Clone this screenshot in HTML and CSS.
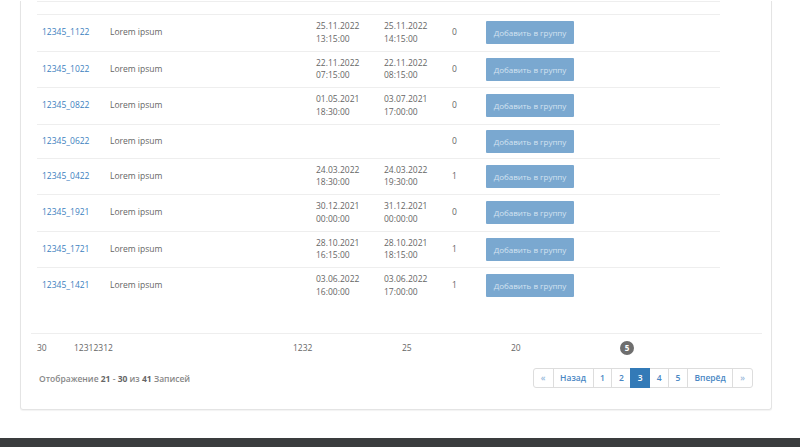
FILE: index.html
```html
<!DOCTYPE html>
<html lang="ru">
<head>
    <meta charset="UTF-8">
    <meta name="viewport" content="width=device-width, initial-scale=1.0">
    <title>Группы</title>
    <link rel="stylesheet" href="styles.css">
</head>
<body>
    <div class="card">
        <div class="scroll-body">
            <table class="grid">
                <colgroup>
                    <col class="c-id"><col class="c-name"><col class="c-date"><col class="c-date"><col class="c-count"><col>
                </colgroup>
                <tr class="spacer"><td colspan="6"></td></tr>
                <tr>
                    <td><a href="#">12345_1122</a></td>
                    <td>Lorem ipsum</td>
                    <td>25.11.2022<br>13:15:00</td>
                    <td>25.11.2022<br>14:15:00</td>
                    <td>0</td>
                    <td><button class="btn-add" disabled>Добавить в группу</button></td>
                </tr>
                <tr>
                    <td><a href="#">12345_1022</a></td>
                    <td>Lorem ipsum</td>
                    <td>22.11.2022<br>07:15:00</td>
                    <td>22.11.2022<br>08:15:00</td>
                    <td>0</td>
                    <td><button class="btn-add" disabled>Добавить в группу</button></td>
                </tr>
                <tr>
                    <td><a href="#">12345_0822</a></td>
                    <td>Lorem ipsum</td>
                    <td>01.05.2021<br>18:30:00</td>
                    <td>03.07.2021<br>17:00:00</td>
                    <td>0</td>
                    <td><button class="btn-add" disabled>Добавить в группу</button></td>
                </tr>
                <tr>
                    <td><a href="#">12345_0622</a></td>
                    <td>Lorem ipsum</td>
                    <td></td>
                    <td></td>
                    <td>0</td>
                    <td><button class="btn-add" disabled>Добавить в группу</button></td>
                </tr>
                <tr>
                    <td><a href="#">12345_0422</a></td>
                    <td>Lorem ipsum</td>
                    <td>24.03.2022<br>18:30:00</td>
                    <td>24.03.2022<br>19:30:00</td>
                    <td>1</td>
                    <td><button class="btn-add" disabled>Добавить в группу</button></td>
                </tr>
                <tr>
                    <td><a href="#">12345_1921</a></td>
                    <td>Lorem ipsum</td>
                    <td>30.12.2021<br>00:00:00</td>
                    <td>31.12.2021<br>00:00:00</td>
                    <td>0</td>
                    <td><button class="btn-add" disabled>Добавить в группу</button></td>
                </tr>
                <tr>
                    <td><a href="#">12345_1721</a></td>
                    <td>Lorem ipsum</td>
                    <td>28.10.2021<br>16:15:00</td>
                    <td>28.10.2021<br>18:15:00</td>
                    <td>1</td>
                    <td><button class="btn-add" disabled>Добавить в группу</button></td>
                </tr>
                <tr>
                    <td><a href="#">12345_1421</a></td>
                    <td>Lorem ipsum</td>
                    <td>03.06.2022<br>16:00:00</td>
                    <td>03.06.2022<br>17:00:00</td>
                    <td>1</td>
                    <td><button class="btn-add" disabled>Добавить в группу</button></td>
                </tr>
            </table>
        </div>

        <table class="grid-foot">
            <tr>
                <td class="f-1">30</td>
                <td class="f-2">12312312</td>
                <td class="f-3">1232</td>
                <td class="f-3">25</td>
                <td class="f-3">20</td>
                <td><span class="badge">5</span></td>
            </tr>
        </table>

        <div class="grid-bottom">
            <div class="info">Отображение <b>21</b> - <b>30</b> из <b>41</b> Записей</div>
            <ul class="pager">
                <li class="edge"><a href="#">«</a></li>
                <li><a href="#">Назад</a></li>
                <li><a href="#">1</a></li>
                <li><a href="#">2</a></li>
                <li class="active"><a href="#">3</a></li>
                <li><a href="#">4</a></li>
                <li><a href="#">5</a></li>
                <li><a href="#">Вперёд</a></li>
                <li class="edge"><a href="#">»</a></li>
            </ul>
        </div>
    </div>

    <footer class="site-footer"></footer>
</body>
</html>
```

FILE: styles.css
```css
body {
    margin: 0;
    font-family: 'Open Sans', 'Liberation Sans', sans-serif;
    font-size: 8.5px;
    color: #666;
    background: #fff;
}

.card {
    margin-left: 20px;
    width: 752px;
    box-sizing: border-box;
    border: 1px solid #e4e4e4;
    border-top: none;
    border-radius: 0 0 3px 3px;
    box-shadow: 0 1px 1px rgba(0, 0, 0, 0.05);
    padding: 0 9px 21px 10px;
}

.scroll-body {
    padding-left: 6px;
    padding-bottom: 29px;
}

.grid {
    width: 683px;
    border-collapse: separate;
    border-spacing: 0;
    table-layout: fixed;
    margin-top: 1px;
}

.c-id { width: 68px; }
.c-name { width: 206px; }
.c-date { width: 68px; }
.c-count { width: 34px; }

.grid td {
    border-top: 1px solid #eeeeee;
    padding: 5px 5px;
    line-height: 12.75px;
    vertical-align: middle;
    white-space: nowrap;
}

.grid .spacer td {
    height: 12px;
    padding: 0;
}

.grid a {
    color: #3d7fc0;
    text-decoration: none;
}

.btn-add {
    width: 88px;
    height: 23px;
    border: none;
    border-radius: 1px;
    background: #7aa8d0;
    color: #d4e3f1;
    font-family: 'Open Sans', 'Liberation Sans', sans-serif;
    font-size: 8px;
    padding: 0;
    display: block;
}

.grid-foot {
    width: 731px;
    border-collapse: separate;
    border-spacing: 0;
    table-layout: fixed;
}

.grid-foot td {
    border-top: 1px solid #eeeeee;
    padding: 7px 6px;
    line-height: 13px;
    vertical-align: middle;
}

.f-1 { width: 25px; }
.f-2 { width: 207px; }
.f-3 { width: 97px; }

.badge {
    display: inline-block;
    width: 14px;
    height: 14px;
    line-height: 14px;
    border-radius: 50%;
    background: #6e6e6e;
    color: #fff;
    font-size: 8px;
    font-weight: 700;
    text-align: center;
    vertical-align: middle;
}

.grid-bottom {
    display: flex;
    justify-content: space-between;
    align-items: center;
    margin-top: 6px;
}

.info {
    padding-left: 8px;
    color: #888;
    font-weight: 600;
}

.info b {
    color: #666;
    font-weight: 700;
}

.pager {
    display: flex;
    list-style: none;
    margin: 0 9px 0 0;
    padding: 0;
    font-weight: 600;
}

.pager li a {
    display: block;
    height: 18px;
    line-height: 18px;
    padding: 0 6.5px;
    border: 1px solid #dddddd;
    margin-left: -1px;
    color: #4a87c4;
    text-decoration: none;
}

.pager li:first-child a {
    margin-left: 0;
    border-radius: 3px 0 0 3px;
}

.pager li:last-child a {
    border-radius: 0 3px 3px 0;
}

.pager .edge a {
    color: #9bbbdc;
    padding: 0 7px;
}

.pager .active a {
    background: #337ab7;
    border-color: #337ab7;
    color: #fff;
    position: relative;
}

.site-footer {
    margin-top: 28px;
    height: 20px;
    background: #3a3c3e;
}
```
